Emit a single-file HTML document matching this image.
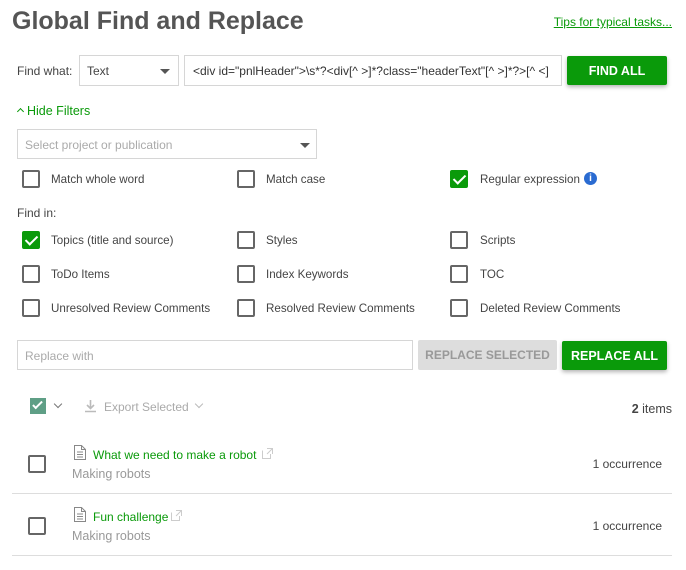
<!DOCTYPE html>
<html><head><style>
*{box-sizing:border-box;margin:0;padding:0}
body{width:686px;height:570px;background:#fff;font-family:"Liberation Sans",sans-serif;color:#444;font-size:12px;position:relative;overflow:hidden}
.a{position:absolute;white-space:nowrap}
.cb{position:absolute;width:18px;height:18px;border:2px solid #666;border-radius:2px;background:#fff}
.cb.on{background:#0a9a0a;border-color:#0a9a0a}
.cb.on::after{content:"";position:absolute;left:4px;top:0px;width:5px;height:10px;border:solid #fff;border-width:0 2px 2px 0;transform:rotate(45deg)}
.lbl{position:absolute;font-size:11.6px;color:#444;white-space:nowrap}
.box{position:absolute;border:1px solid #d6d6d6;background:#fff}
.btn{position:absolute;background:#0a9a0a;color:#fff;font-weight:bold;font-size:12.5px;display:flex;align-items:center;justify-content:center;box-shadow:0 2px 4px rgba(0,0,0,.3);border-radius:2px}
.tri{position:absolute;width:0;height:0;border-left:5px solid transparent;border-right:5px solid transparent;border-top:5px solid #555}
</style></head><body>
<div class="a" style="left:12px;top:7px;font-size:25px;font-weight:bold;color:#555">Global Find and Replace</div>
<div class="a" style="right:14px;top:15px;font-size:12px;color:#0a9a0a;text-decoration:underline">Tips for typical tasks...</div>

<div class="a" style="left:17px;top:64px;font-size:12px">Find what:</div>
<div class="box" style="left:79px;top:55px;width:100px;height:31px"><span class="a" style="left:7px;top:8px">Text</span><div class="tri" style="left:80px;top:13px"></div></div>
<div class="box" style="left:184px;top:55px;width:378px;height:31px;overflow:hidden"><span class="a" style="left:8px;top:8px;font-size:12px;color:#333">&lt;div id="pnlHeader"&gt;\s*?&lt;div[^ &gt;]*?class="headerText"[^ &gt;]*?&gt;[^ &lt;]</span></div>
<div class="btn" style="left:567px;top:56px;width:100px;height:29px">FIND ALL</div>

<div class="a" style="left:17px;top:104px;color:#0a9a0a;font-size:12.5px"><span style="display:inline-block;width:5px;height:5px;border-left:1.5px solid #0a9a0a;border-top:1.5px solid #0a9a0a;transform:rotate(45deg);margin:0 4px 1px 1px"></span>Hide Filters</div>
<div class="box" style="left:17px;top:129px;width:300px;height:30px"><span class="a" style="left:7px;top:8px;color:#aaa">Select project or publication</span><div class="tri" style="left:282px;top:13px"></div></div>

<div class="cb" style="left:22px;top:170px"></div><div class="lbl" style="left:51px;top:173px">Match whole word</div>
<div class="cb" style="left:237px;top:170px"></div><div class="lbl" style="left:266px;top:173px">Match case</div>
<div class="cb on" style="left:450px;top:170px"></div><div class="lbl" style="left:480px;top:173px">Regular expression</div>
<div class="a" style="left:584px;top:172px;width:13px;height:13px;border-radius:50%;background:#2a6bd1;color:#fff;font-size:10px;font-weight:bold;text-align:center;line-height:13px">i</div>

<div class="a" style="left:17px;top:206px">Find in:</div>
<div class="cb on" style="left:22px;top:231px"></div><div class="lbl" style="left:51px;top:234px">Topics (title and source)</div>
<div class="cb" style="left:237px;top:231px"></div><div class="lbl" style="left:266px;top:234px">Styles</div>
<div class="cb" style="left:450px;top:231px"></div><div class="lbl" style="left:480px;top:234px">Scripts</div>
<div class="cb" style="left:22px;top:265px"></div><div class="lbl" style="left:51px;top:268px">ToDo Items</div>
<div class="cb" style="left:237px;top:265px"></div><div class="lbl" style="left:266px;top:268px">Index Keywords</div>
<div class="cb" style="left:450px;top:265px"></div><div class="lbl" style="left:480px;top:268px">TOC</div>
<div class="cb" style="left:22px;top:299px"></div><div class="lbl" style="left:51px;top:302px">Unresolved Review Comments</div>
<div class="cb" style="left:237px;top:299px"></div><div class="lbl" style="left:266px;top:302px">Resolved Review Comments</div>
<div class="cb" style="left:450px;top:299px"></div><div class="lbl" style="left:480px;top:302px">Deleted Review Comments</div>

<div class="box" style="left:17px;top:340px;width:396px;height:30px"><span class="a" style="left:7px;top:8px;color:#aaa">Replace with</span></div>
<div class="a" style="left:418px;top:340px;width:139px;height:30px;background:#ddd;color:#999;font-weight:bold;font-size:12px;display:flex;align-items:center;justify-content:center;border-radius:2px">REPLACE SELECTED</div>
<div class="btn" style="left:562px;top:341px;width:105px;height:29px">REPLACE ALL</div>

<div class="a" style="left:30px;top:398px;width:16px;height:16px;background:#5f9f86"></div>
<div class="a" style="left:35px;top:399px;width:5px;height:10px;border:solid #fff;border-width:0 2px 2px 0;transform:rotate(45deg)"></div>
<div class="a" style="left:55px;top:401px;width:6px;height:6px;border-right:1.5px solid #777;border-bottom:1.5px solid #777;transform:rotate(45deg)"></div>
<svg class="a" style="left:84px;top:399px" width="13" height="14" viewBox="0 0 13 14"><path d="M6.5 1v8M3 6l3.5 3.5L10 6M1 12.5h11" stroke="#bbb" stroke-width="1.6" fill="none"/></svg>
<div class="a" style="left:104px;top:400px;color:#aaa;font-size:12px">Export Selected</div>
<div class="a" style="left:196px;top:401px;width:6px;height:6px;border-right:1.5px solid #bbb;border-bottom:1.5px solid #bbb;transform:rotate(45deg)"></div>
<div class="a" style="right:14px;top:402px;font-size:12.5px"><b>2</b> items</div>

<div class="cb" style="left:28px;top:455px"></div>
<svg class="a" style="left:74px;top:445px" width="12" height="15" viewBox="0 0 12 15"><path d="M.5.5h7l4 4v10H.5z M7.5.5v4h4 M3 7h6M3 9.5h6M3 12h6" stroke="#888" fill="none"/></svg>
<div class="a" style="left:93px;top:448px;color:#0a9a0a;font-size:12px">What we need to make a robot</div>
<svg class="a" style="left:262px;top:448px" width="11" height="11"><path d="M.5 2.5v8h8V6M5 .5h5.5V6M10.5.5L5 6" stroke="#ccc" fill="none"/></svg>
<div class="a" style="left:72px;top:467px;color:#999;font-size:12.5px">Making robots</div>
<div class="a" style="right:24px;top:457px;font-size:12px">1 occurrence</div>
<div class="a" style="left:12px;top:493px;width:660px;height:1px;background:#ddd"></div>

<div class="cb" style="left:28px;top:517px"></div>
<svg class="a" style="left:74px;top:507px" width="12" height="15" viewBox="0 0 12 15"><path d="M.5.5h7l4 4v10H.5z M7.5.5v4h4 M3 7h6M3 9.5h6M3 12h6" stroke="#888" fill="none"/></svg>
<div class="a" style="left:93px;top:510px;color:#0a9a0a;font-size:12px">Fun challenge</div>
<svg class="a" style="left:171px;top:510px" width="11" height="11"><path d="M.5 2.5v8h8V6M5 .5h5.5V6M10.5.5L5 6" stroke="#ccc" fill="none"/></svg>
<div class="a" style="left:72px;top:529px;color:#999;font-size:12.5px">Making robots</div>
<div class="a" style="right:24px;top:519px;font-size:12px">1 occurrence</div>
<div class="a" style="left:12px;top:555px;width:660px;height:1px;background:#ddd"></div>
</body></html>
